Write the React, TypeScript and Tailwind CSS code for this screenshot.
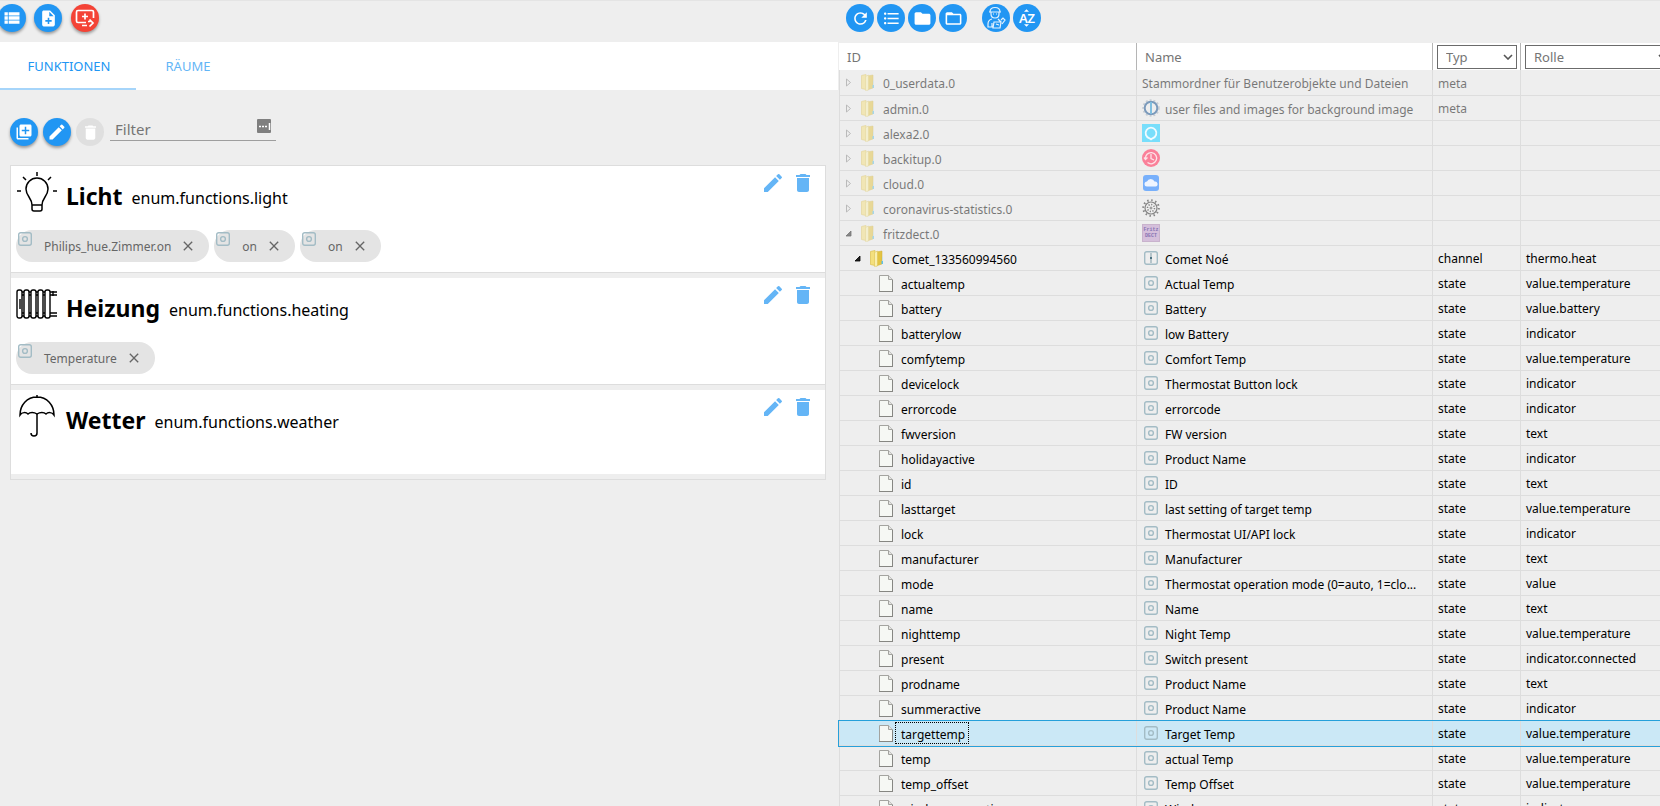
import React, { useState } from 'react';
import clsx from 'clsx';
import {
  MdClose,
  MdDelete,
  MdEdit,
  MdFolder,
  MdFolderOpen,
  MdFormatListBulleted,
  MdLibraryAdd,
  MdNoteAdd,
  MdRefresh,
  MdViewList,
} from 'react-icons/md';

type RowKind = 'root' | 'channel' | 'state';

interface ObjectRow {
  id: string;
  name: string;
  kind: RowKind;
  type?: string;
  role?: string;
  icon?: string;
  open?: boolean;
}

interface EnumItem {
  title: string;
  id: string;
  icon: React.ReactNode;
  members: string[];
}

const state = (id: string, name: string, role: string): ObjectRow => ({ id, name, role, kind: 'state', type: 'state', icon: 'state' });

const rows: ObjectRow[] = [
  { id: '0_userdata.0', name: 'Stammordner für Benutzerobjekte und Dateien', kind: 'root', type: 'meta' },
  { id: 'admin.0', name: 'user files and images for background image', kind: 'root', type: 'meta', icon: 'admin' },
  { id: 'alexa2.0', name: '', kind: 'root', icon: 'alexa' },
  { id: 'backitup.0', name: '', kind: 'root', icon: 'backitup' },
  { id: 'cloud.0', name: '', kind: 'root', icon: 'cloud' },
  { id: 'coronavirus-statistics.0', name: '', kind: 'root', icon: 'corona' },
  { id: 'fritzdect.0', name: '', kind: 'root', icon: 'fritz', open: true },
  { id: 'Comet_133560994560', name: 'Comet Noé', kind: 'channel', type: 'channel', role: 'thermo.heat', icon: 'channel', open: true },
  state('actualtemp', 'Actual Temp', 'value.temperature'),
  state('battery', 'Battery', 'value.battery'),
  state('batterylow', 'low Battery', 'indicator'),
  state('comfytemp', 'Comfort Temp', 'value.temperature'),
  state('devicelock', 'Thermostat Button lock', 'indicator'),
  state('errorcode', 'errorcode', 'indicator'),
  state('fwversion', 'FW version', 'text'),
  state('holidayactive', 'Product Name', 'indicator'),
  state('id', 'ID', 'text'),
  state('lasttarget', 'last setting of target temp', 'value.temperature'),
  state('lock', 'Thermostat UI/API lock', 'indicator'),
  state('manufacturer', 'Manufacturer', 'text'),
  state('mode', 'Thermostat operation mode (0=auto, 1=clo...', 'value'),
  state('name', 'Name', 'text'),
  state('nighttemp', 'Night Temp', 'value.temperature'),
  state('present', 'Switch present', 'indicator.connected'),
  state('prodname', 'Product Name', 'text'),
  state('summeractive', 'Product Name', 'indicator'),
  state('targettemp', 'Target Temp', 'value.temperature'),
  state('temp', 'actual Temp', 'value.temperature'),
  state('temp_offset', 'Temp Offset', 'value.temperature'),
  state('windowopenactiv', 'Window', 'indicator'),
];

const BulbIcon = () => (
  <svg width="42" height="42" viewBox="0 0 42 42" fill="none" stroke="#000" strokeWidth="1.5">
    <path d="M21 1v4M7 6l3 3M35 6l-3 3M1 20h4M37 20h4" />
    <path d="M16 34c0-7-6-9-6-16a11 11 0 0 1 22 0c0 7-6 9-6 16zM16 34v4q0 2 2 2h6q2 0 2-2v-4" />
  </svg>
);

const RadiatorIcon = () => (
  <svg width="42" height="42" viewBox="0 0 42 42" fill="none" stroke="#000" strokeWidth="1.4">
    {[1, 8, 15, 22, 29].map((x) => (
      <rect key={x} x={x} y="7" width="5" height="28" rx="2" />
    ))}
    <path d="M6 9h2M6 12h2M13 9h2M13 12h2M20 9h2M20 12h2M27 9h2M27 12h2M6 30h2M6 33h2M13 30h2M13 33h2M20 30h2M20 33h2M27 30h2M27 33h2" />
    <path d="M34 9h7M34 12h7M37 8v5M34 30h7M34 33h7M4 16v10" />
  </svg>
);

const UmbrellaIcon = () => (
  <svg width="42" height="42" viewBox="0 0 42 42" fill="none" stroke="#000" strokeWidth="1.5">
    <path d="M21 0v3M4 20C4 10 11 2 21 2s17 8 17 18c-2-3-6-3-8-1-2-2-6-2-9 0-3-2-7-2-9 0-2-2-6-2-8 1z" />
    <path d="M21 19v19q0 3-3 3t-3-3" />
  </svg>
);

const StateIcon = () => (
  <svg width="14" height="14" viewBox="0 0 14 14" fill="none" stroke="#a3bcc5" className="shrink-0">
    <rect x=".7" y=".7" width="12.600" height="12.600" rx="2" strokeWidth="1.400" />
    <circle cx="7" cy="7" r="2.400" strokeWidth="1.400" />
  </svg>
);

const ChannelIcon = () => (
  <svg width="14" height="14" viewBox="0 0 14 14" fill="none" stroke="#a3bcc5" className="shrink-0">
    <rect x=".7" y=".7" width="12.600" height="12.600" rx="2" strokeWidth="1.400" />
    <path d="M7 2v10" stroke="#7f9ba6" />
    <path d="M6 7h2" stroke="#4d7383" strokeWidth="2" />
  </svg>
);

const AdapterIcon = ({ icon }: { icon: string }) => {
  if (icon === 'admin') {
    return (
      <svg width="18" height="18" viewBox="0 0 18 18" fill="none">
        <circle cx="9" cy="9" r="8" stroke="#c6ccd2" strokeWidth="1.5" strokeDasharray="2 2" />
        <circle cx="9" cy="9" r="6.3" stroke="#7b9abb" strokeWidth="2" />
        <path d="M9 3v12" stroke="#80bfe0" strokeWidth="2" />
      </svg>
    );
  }
  if (icon === 'alexa') {
    return (
      <svg width="18" height="18" viewBox="0 0 18 18" fill="none">
        <path d="M0 0h18v18H0z" fill="#78defb" />
        <path d="M7.500 14.300a5.400 5.400 0 1 1 3 0l-1.500 1z" stroke="#f0fbff" strokeWidth="1.800" />
      </svg>
    );
  }
  if (icon === 'backitup') {
    return (
      <svg width="18" height="18" viewBox="0 0 18 18" fill="none">
        <circle cx="9" cy="9" r="9" fill="#fa8099" />
        <path d="M3.500 10a5.600 5.600 0 1 1 2 3.500M2 8.500l1.500 2 2-2M9 5v4.500l3 1.500" stroke="#fde3e8" strokeWidth="1.300" />
      </svg>
    );
  }
  if (icon === 'cloud') {
    return (
      <svg width="18" height="18" viewBox="0 0 18 18">
        <rect x="1" y="1" width="16" height="16" rx="3" fill="#78b0fb" />
        <path d="M5 12.500a2.500 2.500 0 0 1 0-5 4 4 0 0 1 7.500 0 2.500 2.500 0 0 1 1 5z" fill="#eff5ff" />
      </svg>
    );
  }
  if (icon === 'corona') {
    return (
      <svg width="18" height="18" viewBox="0 0 18 18" fill="none" stroke="#858585">
        <circle cx="9" cy="9" r="7.800" strokeWidth="2" strokeDasharray="1.500 2.580" />
        <circle cx="9" cy="9" r="6" strokeWidth="1.200" />
        <circle cx="9" cy="9" r="3.500" strokeWidth="1.500" strokeDasharray="1.200 1.500" />
        <circle cx="9" cy="9" r="1" />
      </svg>
    );
  }
  return (
    <span className="flex h-[18px] w-[18px] flex-col items-center justify-center border border-[#c9b3cd] bg-[#d5bfdb] font-mono text-[5px] leading-[6px] font-bold text-[#8573b3]">
      <span>Fritz</span>
      <span>DECT</span>
    </span>
  );
};

const FolderIcon = () => (
  <svg width="14" height="17" viewBox="0 0 14 17" className="block shrink-0">
    <path d="M.5 1.500L5 .5v15l-4.500-1z" fill="#f4e07d" stroke="#dcc04e" strokeWidth=".7" />
    <path d="M6 2l6-1v13l-6 2z" fill="#e3c443" stroke="#cfae35" strokeWidth=".5" />
    <path d="M4.500 2.500l3-1.500v15l-3 .5z" fill="#f9efb0" stroke="#dcc04e" strokeWidth=".5" />
    <path d="M12.500 7v6" stroke="#c8dfe2" />
    <path d="M11.500 11h1.500v3h-1.500z" fill="#5fc0e8" />
  </svg>
);

const FileIcon = () => (
  <svg width="14" height="17" viewBox="0 0 14 17" className="shrink-0">
    <path d="M.5.500h9l4 4v12H.5z" fill="#f6f8f4" stroke="#a3a39f" />
    <path d="M9.500.500v4h4" fill="#e4e4e2" stroke="#a3a39f" />
    <path d="M0 16.500h14M13.500 5v12" stroke="#868682" />
  </svg>
);

const Expander = ({ open }: { open?: boolean }) => (
  <svg width="6" height="9" viewBox="0 0 6 9" className="shrink-0 overflow-visible">
    {open ? <path d="M5 2v5H0z" fill="#222" stroke="#000" strokeWidth=".8" /> : <path d="M.5 1v7l4-3.500z" fill="none" stroke="#888" />}
  </svg>
);

const AddObjectIcon = () => (
  <svg width="20" height="20" viewBox="0 0 20 20" fill="none" stroke="#fff" strokeWidth="1.700">
    <path d="M11 14.500H3q-1.500 0-1.500-1.500V4q0-1.500 1.500-1.500h14q1.500 0 1.500 1.500v6M7 17.500h5M10 5.500v6M7 8.500h6" />
    <path d="M13 13.500h2.500M14.500 11.500l3.500 3.500-3.500 3.500" />
  </svg>
);

const ExpertIcon = () => (
  <svg width="20" height="24" viewBox="0 0 20 24" fill="none" stroke="#e4f2fe" strokeWidth="1.200">
    <path d="M4 6q0-4.500 5-4.500T14 6M3 6h12M5 6v2q0 4 4 4t4-4V6M7 8h1M10 8h1" />
    <path d="M6 13q-4 1-4 5v3h4v-4M7 22h7l1-6H8zM12 13l3 3M15 14l2-2 2 2-3 4M10 18l3 1" />
  </svg>
);

const ArrowsAZ = () => (
  <span className="flex flex-col items-center text-[13px] leading-[12px] font-semibold">
    <svg width="5" height="3" viewBox="0 0 6 3"><path d="M0 3l3-3 3 3z" fill="#fff" /></svg>
    <span>AZ</span>
    <svg width="5" height="3" viewBox="0 0 6 3"><path d="M0 0h6L3 3z" fill="#fff" /></svg>
  </span>
);

interface RoundButtonProps {
  label: string;
  color?: string;
  flat?: boolean;
  disabled?: boolean;
  children: React.ReactNode;
}

const RoundButton: React.FC<RoundButtonProps> = ({ label, color = 'bg-[#2196f3]', flat, disabled, children }) => (
  <button
    type="button"
    aria-label={label}
    disabled={disabled}
    className={clsx('flex h-7 w-7 shrink-0 items-center justify-center rounded-full text-white', color, !flat && 'shadow-[0_2px_3px_rgba(0,0,0,0.35)]')}
  >
    {children}
  </button>
);

const enums: EnumItem[] = [
  { title: 'Licht', id: 'enum.functions.light', icon: <BulbIcon />, members: ['Philips_hue.Zimmer.on', 'on', 'on'] },
  { title: 'Heizung', id: 'enum.functions.heating', icon: <RadiatorIcon />, members: ['Temperature'] },
  { title: 'Wetter', id: 'enum.functions.weather', icon: <UmbrellaIcon />, members: [] },
];

const EnumCard: React.FC<{ item: EnumItem }> = ({ item }) => (
  <li className={clsx('mb-[5px] bg-white px-[5px] pt-[5px]', item.members.length ? 'h-[107px] border-b border-[#dddddd]' : 'h-[84px]')}>
    <div className="flex items-start">
      {item.icon}
      <h2 className="ml-2 pt-[9px] text-[23px] leading-8 font-bold text-black">{item.title}</h2>
      <span className="ml-[9px] pt-[13px] text-base leading-7 text-black">{item.id}</span>
      <div className="ml-auto flex gap-1.5 pr-[5px] text-[#64b5f6]">
        <button type="button" aria-label={`${item.title} bearbeiten`}><MdEdit size={24} /></button>
        <button type="button" aria-label={`${item.title} löschen`}><MdDelete size={24} /></button>
      </div>
    </div>
    <div className="mt-[17px] flex gap-[5px]">
      {item.members.map((member, i) => (
        <span key={i} className="flex h-8 items-center rounded-2xl bg-[#e4e4e4] pr-[13px] pl-0.5 text-xs text-[#666]">
          <span className="mr-3 self-start pt-0.5"><StateIcon /></span>
          <span className="pt-0.5">{member}</span>
          <button type="button" aria-label={`${member} entfernen`} className="ml-[9px]"><MdClose size={16} /></button>
        </span>
      ))}
    </div>
  </li>
);

const EnumPanel = () => {
  const [filter, setFilter] = useState('');

  return (
    <section className="min-w-0">
      <div className="flex h-[42px] gap-[9px] border-t border-[#e4e4e4] pt-[3px]">
        <div className="-ml-0.5 flex gap-2">
          <RoundButton label="Liste"><MdViewList size={20} /></RoundButton>
          <RoundButton label="Neu"><MdNoteAdd size={19} /></RoundButton>
        </div>
        <RoundButton label="Objekt hinzufügen" color="bg-[#f44336]"><AddObjectIcon /></RoundButton>
      </div>
      <nav className="flex h-12 bg-white text-[13px] text-[#2196f3]">
        <a href="#functions" className="flex w-[136px] items-center justify-center border-b-2 border-[#a6d5fa] pt-1 pl-0.5">FUNKTIONEN</a>
        <a href="#rooms" className="flex w-[104px] items-center justify-center pt-0.5 opacity-70">RÄUME</a>
      </nav>
      <div className="flex h-[75px] items-start gap-[5px] pt-7 pl-[10px]">
        <RoundButton label="Hinzufügen"><MdLibraryAdd size={18} /></RoundButton>
        <RoundButton label="Bearbeiten"><MdEdit size={20} /></RoundButton>
        <RoundButton label="Löschen" color="bg-[#dfdfdf]" flat disabled><MdDelete size={19} /></RoundButton>
        <div className="ml-px flex h-[23px] w-[166px] items-center border-b border-[#9e9e9e] px-[5px]">
          <input
            aria-label="Filter"
            placeholder="Filter"
            value={filter}
            onChange={(e) => setFilter(e.target.value)}
            className="min-w-0 flex-1 text-[15px] outline-none placeholder:text-[#757575]"
          />
          <svg width="14" height="14" viewBox="0 0 14 14" className="mb-1.5">
            <rect width="14" height="14" rx="1" fill="#7f7f7f" />
            <path d="M2 7.500h2M5 7.500h2M8 7.500h2M12.500 4v7" stroke="#fff" strokeWidth="1.500" />
          </svg>
        </div>
      </div>
      <ul className="mr-3 ml-[10px] border border-[#dddddd]">
        {enums.map((item) => <EnumCard key={item.id} item={item} />)}
      </ul>
    </section>
  );
};

const HeaderSelect = ({ label }: { label: string }) => (
  <div className="relative mr-[3px] ml-1">
    <select aria-label={label} className="block h-6 w-full appearance-none border border-[#6b6b6b] bg-white pl-2">
      <option>{label}</option>
    </select>
    <svg width="10" height="6" viewBox="0 0 10 6" fill="none" className="pointer-events-none absolute top-[9px] right-1">
      <path d="M1 1l4 4 4-4" stroke="#555" strokeWidth="1.600" />
    </svg>
  </div>
);

const ObjectTable = () => {
  const [selected, setSelected] = useState('targettemp');
  const head = 'h-[27px] p-0 text-left font-normal';
  const cell = 'border-b border-l border-[#dddddd] py-0 pl-[5px] whitespace-nowrap';

  return (
    <table className="ml-px w-[836px] table-fixed border-separate border-spacing-0 text-xs leading-5">
      <colgroup>
        <col className="w-[297px]" />
        <col className="w-[296px]" />
        <col className="w-[88px]" />
        <col className="w-[155px]" />
      </colgroup>
      <thead className="bg-white text-[13px] text-[#757575]">
        <tr>
          <th className={clsx(head, 'pl-2')}>ID</th>
          <th className={clsx(head, 'border-l border-[#b5b5b5] pl-2')}>Name</th>
          <th className={clsx(head, 'border-l border-[#b5b5b5]')}><HeaderSelect label="Typ" /></th>
          <th className={clsx(head, 'border-l border-[#b5b5b5]')}><HeaderSelect label="Rolle" /></th>
        </tr>
      </thead>
      <tbody>
        {rows.map((row) => {
          const active = row.id === selected;
          const dim = row.kind === 'root' && 'opacity-50';
          // labels next to an icon sit slightly lower than plain ones
          const textShift = row.icon ? 'pt-1 leading-[18px]' : 'pt-0.5';
          return (
            <tr
              key={row.id}
              onClick={() => setSelected(row.id)}
              className={clsx('h-[25px] text-black first:h-[26px]', active && 'bg-[#cbe8f6] outline outline-[#26a0da]')}
            >
              <td className={cell}>
                <div className={clsx('flex items-center', dim, row.kind === 'root' && 'pl-px', row.kind === 'channel' && 'pl-[10px]', row.kind === 'state' && 'pl-[34px]')}>
                  {row.kind !== 'state' && <Expander open={row.open} />}
                  {row.kind === 'state' ? <FileIcon /> : <span className="ml-[9px]"><FolderIcon /></span>}
                  <span className={clsx('ml-0.5 pr-1 pl-1.5', textShift, active && 'outline -outline-offset-1 outline-dotted outline-black')}>{row.id}</span>
                </div>
              </td>
              <td className={cell}>
                <div className="flex items-center">
                  {row.icon && (
                    <span className="mr-[5px] flex h-[18px] w-[18px] shrink-0 items-center justify-center">
                      {row.icon === 'state' ? <StateIcon /> : row.icon === 'channel' ? <ChannelIcon /> : <AdapterIcon icon={row.icon} />}
                    </span>
                  )}
                  <span className={clsx(dim, textShift)}>{row.name}</span>
                </div>
              </td>
              <td className={cell}><div className={clsx('pt-0.5', dim)}>{row.type}</div></td>
              <td className={cell}><div className="pt-0.5">{row.role}</div></td>
            </tr>
          );
        })}
      </tbody>
    </table>
  );
};

const ObjectPanel = () => (
  <section className="min-w-0 overflow-hidden">
    <div className="flex h-[43px] gap-[3px] border-t border-[#e4e4e4] pt-[3px] pl-2">
      <RoundButton label="Aktualisieren" flat><MdRefresh size={19} /></RoundButton>
      <RoundButton label="Listenansicht" flat><MdFormatListBulleted size={19} /></RoundButton>
      <RoundButton label="Alle zuklappen" flat><MdFolder size={19} /></RoundButton>
      <RoundButton label="Alle aufklappen" flat><MdFolderOpen size={19} /></RoundButton>
      <span className="w-[9px]" />
      <RoundButton label="Expertenmodus" flat><ExpertIcon /></RoundButton>
      <RoundButton label="Sortieren" flat><ArrowsAZ /></RoundButton>
    </div>
    <ObjectTable />
  </section>
);

const App: React.FC = () => (
  <main className="grid h-screen grid-cols-[calc(50%+8px)_1fr] overflow-hidden bg-[#eeeeee] font-['Noto_Sans',sans-serif]">
    <EnumPanel />
    <ObjectPanel />
  </main>
);

export default App;
